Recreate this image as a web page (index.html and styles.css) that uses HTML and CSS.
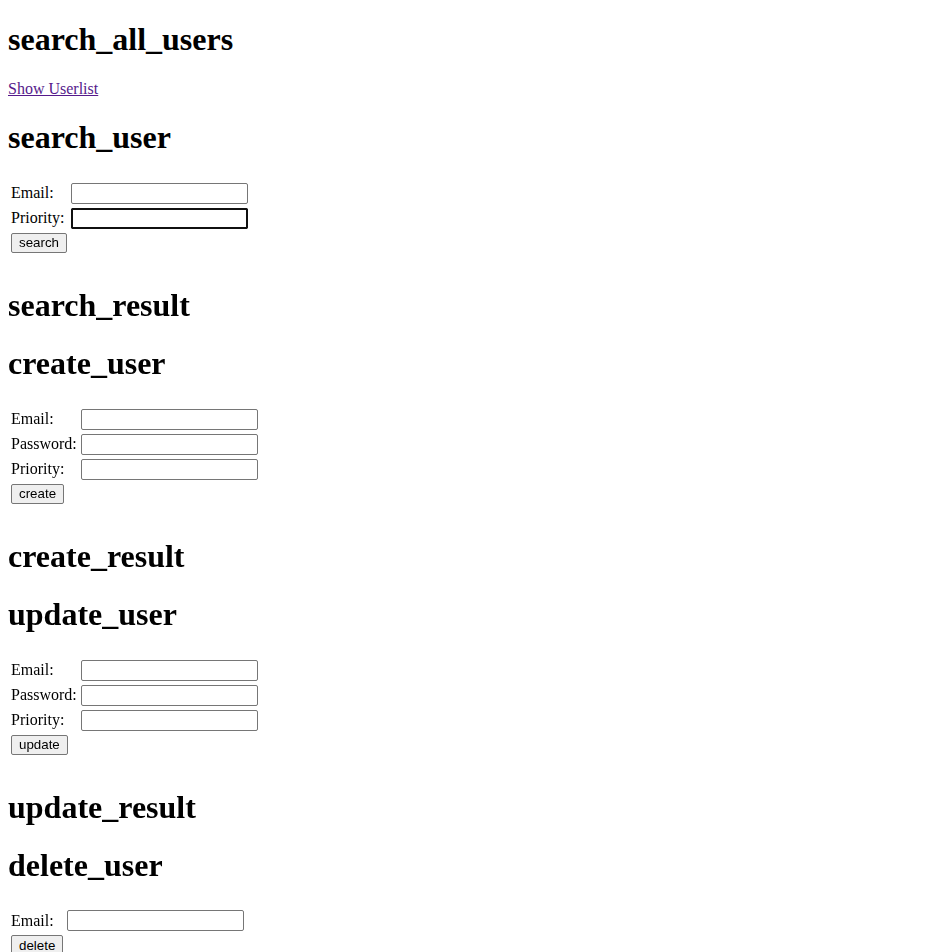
FILE: index.html
```html
<!DOCTYPE html>
<html lang="en">
<head>
    <meta charset="UTF-8">
    <title>User Admin</title>
    <link rel="stylesheet" href="styles.css">
</head>
<body>
    <h1 class="title">search_all_users</h1>
    <p><a class="link" href="#userlist">Show Userlist</a></p>

    <h1 class="title">search_user</h1>
    <form class="user-form">
        <table class="form-table">
            <tr><td class="label label-priority">Email:</td><td><input class="field" type="text" name="email"></td></tr>
            <tr><td class="label label-priority">Priority:</td><td><input class="field field-focused" type="text" name="priority" autofocus></td></tr>
            <tr><td><button class="btn" type="button">search</button></td></tr>
        </table>
    </form>

    <h1 class="title">search_result</h1>
    <div class="result"></div>

    <h1 class="title">create_user</h1>
    <form class="user-form">
        <table class="form-table">
            <tr><td class="label">Email:</td><td><input class="field" type="text" name="email"></td></tr>
            <tr><td class="label">Password:</td><td><input class="field" type="password" name="password"></td></tr>
            <tr><td class="label">Priority:</td><td><input class="field" type="text" name="priority"></td></tr>
            <tr><td><button class="btn" type="button">create</button></td></tr>
        </table>
    </form>

    <h1 class="title">create_result</h1>
    <div class="result"></div>

    <h1 class="title">update_user</h1>
    <form class="user-form">
        <table class="form-table">
            <tr><td class="label">Email:</td><td><input class="field" type="text" name="email"></td></tr>
            <tr><td class="label">Password:</td><td><input class="field" type="password" name="password"></td></tr>
            <tr><td class="label">Priority:</td><td><input class="field" type="text" name="priority"></td></tr>
            <tr><td><button class="btn" type="button">update</button></td></tr>
        </table>
    </form>

    <h1 class="title">update_result</h1>
    <div class="result"></div>

    <h1 class="title">delete_user</h1>
    <form class="user-form">
        <table class="form-table">
            <tr><td class="label label-email">Email:</td><td><input class="field" type="text" name="email"></td></tr>
            <tr><td><button class="btn" type="button">delete</button></td></tr>
        </table>
    </form>
</body>
</html>
```

FILE: styles.css
```css
/* Plain default-looking page */
body {
    margin: 0 8px 8px 8px;
    font-family: "Liberation Serif", "Times New Roman", serif;
    font-size: 16px;
    color: #000000;
    background-color: #ffffff;
}
.title {
    font-size: 32px;
    font-weight: bold;
    margin: 21.44px 0;
}
p {
    margin: 16px 0;
}
.link {
    color: #551a8b;
    text-decoration: underline;
}
.user-form {
    margin: 0 0 31px 0;
    padding-top: 2px;
}
.form-table {
    border-collapse: separate;
    border-spacing: 2px;
}
.form-table td {
    padding: 1px;
    vertical-align: middle;
}
.label-priority {
    width: 56px;
}
.label-email {
    width: 52px;
}
.field {
    box-sizing: border-box;
    width: 177px;
    height: 21px;
    padding: 1px 2px;
    border: 1px solid #767676;
    border-radius: 2px;
    font-family: "Liberation Sans", Arial, sans-serif;
    font-size: 13.33px;
    background-color: #ffffff;
}
.field-focused,
.field:focus {
    outline: 2px solid #101010;
    outline-offset: -2px;
    border-color: #101010;
}
.btn {
    box-sizing: border-box;
    height: 20px;
    padding: 1px 7px;
    border: 1px solid #767676;
    border-radius: 2px;
    background-color: #efefef;
    color: #000000;
    font-family: "Liberation Sans", Arial, sans-serif;
    font-size: 13.33px;
}
```
